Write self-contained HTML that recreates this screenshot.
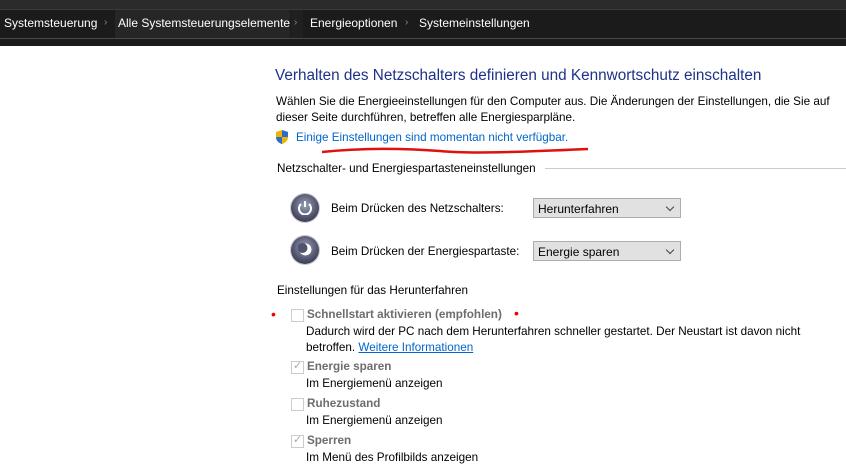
<!DOCTYPE html>
<html><head><meta charset="utf-8"><style>
body{margin:0;width:846px;height:473px;background:#fff;font-family:"Liberation Sans",sans-serif;font-size:11.7px;color:#000;position:relative;overflow:hidden}
.a{position:absolute;white-space:nowrap}
.top{position:absolute;left:0;top:0;width:846px;height:9px;background:#2b2b2b}
.bar{position:absolute;left:0;top:9px;width:846px;height:36px;background:#1b1b1b;border-top:1px solid #3a3a3a}
.ln{position:absolute;left:0;top:38px;width:846px;height:1px;background:#4a4a4a}
.bc{color:#fff;font-size:12px;top:16px}
.sep{color:#888;font-size:10px;top:17px}
.dd{position:absolute;width:148px;height:20px;border:1px solid #adadad;background:#e1e1e1;font-size:12px;line-height:20px;padding-left:4px;box-sizing:border-box}
.dd:after{content:"";position:absolute;right:7px;top:5px;width:5px;height:5px;border-right:1px solid #444;border-bottom:1px solid #444;transform:rotate(45deg)}
.cb{position:absolute;width:11px;height:11px;border:1px solid #ccc;background:#fff}
.g{color:#6d6d6d;font-weight:bold}
.pw{position:absolute;width:28px;height:28px;border-radius:50%;background:radial-gradient(circle at 50% 40%,#9a9fb8,#4d5068 60%,#23253a);box-shadow:0 0 0 1px #c8c8d0}
</style></head><body>
<div class="top"></div><div class="bar"></div><div class="ln"></div>
<div style="position:absolute;left:115px;top:10px;width:175px;height:28px;background:#262626"></div>
<div style="position:absolute;left:291px;top:10px;width:12px;height:28px;background:#202020"></div>
<div class="a bc" style="left:4px">Systemsteuerung</div>
<div class="a sep" style="left:104px">›</div>
<div class="a bc" style="left:118px">Alle Systemsteuerungselemente</div>
<div class="a sep" style="left:294px">›</div>
<div class="a bc" style="left:310px">Energieoptionen</div>
<div class="a sep" style="left:405px">›</div>
<div class="a bc" style="left:419px">Systemeinstellungen</div>

<div class="a" style="left:275px;top:67px;font-size:15.3px;color:#1e3287">Verhalten des Netzschalters definieren und Kennwortschutz einschalten</div>
<div class="a" style="left:276px;top:95px">Wählen Sie die Energieeinstellungen für den Computer aus. Die Änderungen der Einstellungen, die Sie auf</div>
<div class="a" style="left:276px;top:111px">dieser Seite durchführen, betreffen alle Energiesparpläne.</div>
<svg class="a" style="left:275px;top:129px" width="14" height="16" viewBox="0 0 14 16"><path d="M7 1 L13 3 V8 C13 12 10 14 7 15 C4 14 1 12 1 8 V3Z" fill="#f0b400"/><path d="M7 1 L13 3 V8 H7Z M7 8 V15 C4 14 1 12 1 8Z" fill="#2a6fd0"/></svg>
<div class="a" style="left:296px;top:131px;color:#0066cc">Einige Einstellungen sind momentan nicht verfügbar.</div>
<svg class="a" style="left:320px;top:145px" width="270" height="12"><path d="M2 7 C40 3 80 3 120 6 C150 9 200 7 268 4" stroke="#e01010" stroke-width="2.5" fill="none"/></svg>
<div class="a" style="left:277px;top:162px">Netzschalter- und Energiespartasteneinstellungen</div>
<div style="position:absolute;left:545px;top:168px;width:301px;height:1px;background:#ccc"></div>

<div class="pw" style="left:291px;top:194px"></div>
<svg class="a" style="left:297px;top:199px" width="16" height="16"><path d="M4 5 A6 6 0 1 0 12 5" stroke="#fff" stroke-width="2" fill="none"/><path d="M8 2 V8" stroke="#fff" stroke-width="2"/></svg>
<div class="a" style="left:331px;top:202px">Beim Drücken des Netzschalters:</div>
<div class="dd" style="left:533px;top:198px">Herunterfahren</div>

<div class="pw" style="left:291px;top:236px"></div>
<svg class="a" style="left:298px;top:242px" width="15" height="15"><circle cx="7.5" cy="7.5" r="6" fill="#fff"/><circle cx="4.5" cy="6" r="5" fill="#50536c"/></svg>
<div class="a" style="left:331px;top:245px">Beim Drücken der Energiespartaste:</div>
<div class="dd" style="left:533px;top:241px">Energie sparen</div>

<div class="a" style="left:277px;top:284px">Einstellungen für das Herunterfahren</div>
<div class="a" style="left:271px;top:306px;color:#e00;font-size:14px">•</div>
<div class="cb" style="left:291px;top:309px"></div>
<div class="a g" style="left:307px;top:308px">Schnellstart aktivieren (empfohlen)</div>
<div class="a" style="left:514px;top:305px;color:#e00;font-size:14px">•</div>
<div class="a" style="left:306px;top:325px">Dadurch wird der PC nach dem Herunterfahren schneller gestartet. Der Neustart ist davon nicht</div>
<div class="a" style="left:306px;top:341px">betroffen. <span style="color:#0066cc;text-decoration:underline">Weitere Informationen</span></div>
<div class="cb" style="left:291px;top:361px"></div><div class="a" style="left:293px;top:359px;color:#aaa;font-size:11px">✓</div>
<div class="a g" style="left:307px;top:360px">Energie sparen</div>
<div class="a" style="left:306px;top:377px">Im Energiemenü anzeigen</div>
<div class="cb" style="left:291px;top:398px"></div>
<div class="a g" style="left:307px;top:397px">Ruhezustand</div>
<div class="a" style="left:306px;top:414px">Im Energiemenü anzeigen</div>
<div class="cb" style="left:291px;top:435px"></div><div class="a" style="left:293px;top:433px;color:#aaa;font-size:11px">✓</div>
<div class="a g" style="left:307px;top:434px">Sperren</div>
<div class="a" style="left:306px;top:451px">Im Menü des Profilbilds anzeigen</div>
</body></html>
